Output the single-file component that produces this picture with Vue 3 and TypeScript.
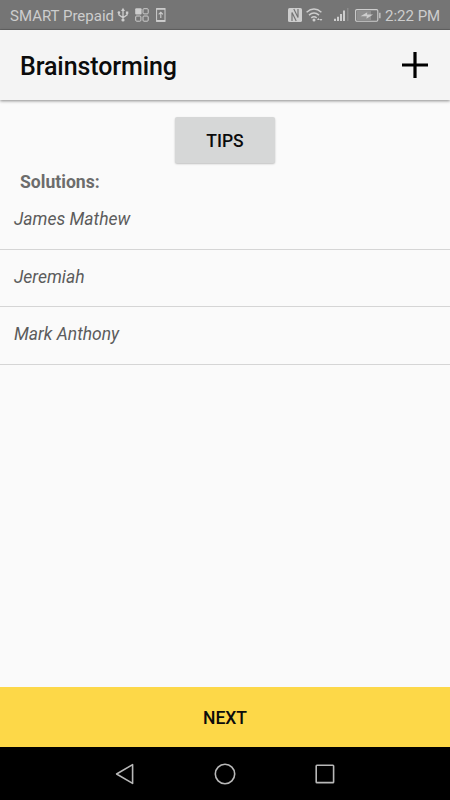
<script setup lang="ts">
const solutions: string[] = ['James Mathew', 'Jeremiah', 'Mark Anthony']
</script>

<template>
  <div class="screen">
    <div class="status">
      <span class="carrier">SMART Prepaid</span>
      <svg class="usb" width="12" height="16" viewBox="0 0 12 16" fill="none" stroke="currentColor">
        <path d="M6 3v10M1.9 5.5v2.3L6 10.8l4.1-3V6" stroke-width="1.3" />
        <path d="M6 .8 8 4H4z" fill="currentColor" stroke="none" />
        <circle cx="6" cy="13" r="1.6" fill="currentColor" stroke="none" />
        <circle cx="1.9" cy="5.6" r="1.3" fill="currentColor" stroke="none" />
        <path d="M8.9 4.5h2.4v2.4H8.9z" fill="currentColor" stroke="none" />
      </svg>
      <svg class="apps" width="14" height="14" viewBox="0 0 14 14" fill="none" stroke="currentColor">
        <rect x=".2" y=".2" width="6.4" height="6.4" rx="1" fill="currentColor" stroke="none" />
        <rect x="8" y=".7" width="5.2" height="5.2" rx="1" />
        <rect x=".7" y="8" width="5.2" height="5.2" rx="1" />
        <rect x="8" y="8" width="5.2" height="5.2" rx="1" />
      </svg>
      <svg class="phone" width="10" height="14" viewBox="0 0 10 14" fill="none" stroke="currentColor">
        <rect x=".6" y=".6" width="8.4" height="12.8" stroke-width="1" />
        <path d="M.5 1h8.6M.5 12.7h8.6" stroke-width="1.6" />
        <path d="M4.8 10V4.4M2.7 6.4l2.1-2.2 2.1 2.2" stroke-width="1.1" />
      </svg>
      <span class="spacer"></span>
      <svg class="nfc" width="14" height="14" viewBox="0 0 14 14">
        <rect width="14" height="14" rx="1.6" fill="currentColor" />
        <path d="M4 13V4.4L8.2 13M10 1v8.6L5.8 1" fill="none" stroke="#757575" stroke-width="1.2" />
      </svg>
      <svg class="wifi" width="17" height="14" viewBox="0 0 17 14" fill="none" stroke="currentColor" stroke-width="1.5">
        <path d="M.6 4.2Q8 -2.3 15.4 4.2M3 7.1q5-4.3 10 0M5.3 9.9q2.7-2.2 5.4 0" />
        <circle cx="8" cy="12" r="1.5" fill="currentColor" stroke="none" />
        <path d="m11 12 1.4-2 1.4 2zM13.6 11h2.8L15 13z" fill="currentColor" stroke="none" />
      </svg>
      <svg class="signal" width="15" height="14" viewBox="0 0 15 14" fill="currentColor">
        <path d="M0 10.7h2V13H0zM3 8.8h2V13H3zM6 6h2v7H6zM9 2.5h2V13H9z" />
        <path d="M13 0h1.5v13H13z" opacity=".25" />
      </svg>
      <svg class="battery" width="26" height="13" viewBox="0 0 26 13">
        <rect x=".6" y=".6" width="22.2" height="11.6" rx="1.2" fill="none" stroke="currentColor" stroke-width="1.1" />
        <path d="M2 2h14v9H2z" fill="currentColor" opacity=".3" />
        <path d="m5.5 7.3 6.8-4.1-.3 2.4h6.1l-6.7 4.2.4-2.5z" fill="currentColor" />
        <path d="M24.2 3.7h1.3v5.5h-1.3z" fill="currentColor" />
      </svg>
      <span class="time">2:22 PM</span>
    </div>

    <header class="bar">
      <h1>Brainstorming</h1>
      <button class="add" aria-label="Add">
        <svg width="26" height="26" viewBox="0 0 26 26"><path d="M13 0v26M0 13h26" stroke="#000" stroke-width="3.2" /></svg>
      </button>
    </header>

    <main>
      <button class="tips">TIPS</button>
      <h2>Solutions:</h2>
      <ul>
        <li v-for="name in solutions" :key="name">{{ name }}</li>
      </ul>
    </main>

    <button class="next">NEXT</button>

    <nav>
      <svg width="20" height="22" viewBox="0 0 20 22"><path d="M17.6 1.6v18.8L1.6 11z" /></svg>
      <svg width="22" height="22" viewBox="0 0 22 22"><circle cx="11" cy="11" r="9.7" /></svg>
      <svg width="20" height="20" viewBox="0 0 20 20"><rect x="1.2" y="1.2" width="17.4" height="17.4" rx=".7" /></svg>
    </nav>
  </div>
</template>

<style>
body {
  margin: 0;
}
</style>

<style scoped>
.screen {
  display: flex;
  flex-direction: column;
  height: 800px;
  background: #fafafa;
  font-family: Roboto, sans-serif;
  color: #0b0b0b;
}
svg {
  display: block;
  flex: none;
}
button {
  border: 0;
  padding: 0;
  font-family: inherit;
  color: inherit;
}
.status {
  box-sizing: border-box;
  flex: none;
  display: flex;
  align-items: center;
  height: 30px;
  padding: 1px 10px 0;
  background: #757575;
  border-bottom: 1px solid #656565;
  color: #cdcdcd;
  font-size: 15px;
  line-height: 28px;
  white-space: nowrap;
}
.carrier {
  width: 107px;
  padding-top: 1px;
}
.apps {
  margin-left: 6px;
}
.phone {
  margin-left: 7px;
}
.spacer {
  flex: 1;
}
.wifi {
  margin-left: 4px;
}
.signal {
  margin-left: 11px;
}
.battery {
  margin-left: 6px;
}
.time {
  width: 55px;
  margin-left: 4px;
  padding-top: 1px;
}
.bar {
  position: relative;
  box-sizing: border-box;
  flex: none;
  display: flex;
  align-items: center;
  justify-content: space-between;
  height: 70px;
  padding: 0 22px 0 20px;
  background: #f4f4f4;
  box-shadow: 0 1px 3px rgba(0, 0, 0, 0.45);
}
h1 {
  margin: 3px 0 0;
  font-size: 25px;
  letter-spacing: -0.1px;
  font-weight: 500;
  line-height: 30px;
}
.add {
  background: none;
}
main {
  flex: 1;
  display: flex;
  flex-direction: column;
}
.tips {
  align-self: center;
  width: 100px;
  height: 46px;
  margin-top: 17px;
  padding-top: 1px;
  border-radius: 2px;
  background: #d6d7d7;
  box-shadow: 0 1px 2px rgba(0, 0, 0, 0.24);
  font-size: 17.5px;
  font-weight: 500;
}
h2 {
  margin: 7px 0 0 20px;
  font-size: 17.6px;
  font-weight: 700;
  line-height: 24px;
  color: #6c6c6c;
}
ul {
  margin: -2px 0 0;
  padding: 0;
  list-style: none;
}
li {
  box-sizing: border-box;
  height: 57.6px;
  padding: 15px 14px 0;
  border-bottom: 1.2px solid #d5d5d5;
  font-size: 17.5px;
  font-style: italic;
  line-height: 24px;
  color: #5c5c5c;
}
.next {
  flex: none;
  height: 60px;
  padding-top: 1px;
  background: #fdd848;
  font-size: 17.5px;
  font-weight: 500;
}
nav {
  box-sizing: border-box;
  flex: none;
  display: flex;
  align-items: center;
  justify-content: space-between;
  height: 53px;
  padding: 0 115px;
  background: #000;
}
nav svg {
  fill: none;
  stroke: #b8b8b8;
  stroke-width: 1.6;
  stroke-linejoin: round;
}
</style>
